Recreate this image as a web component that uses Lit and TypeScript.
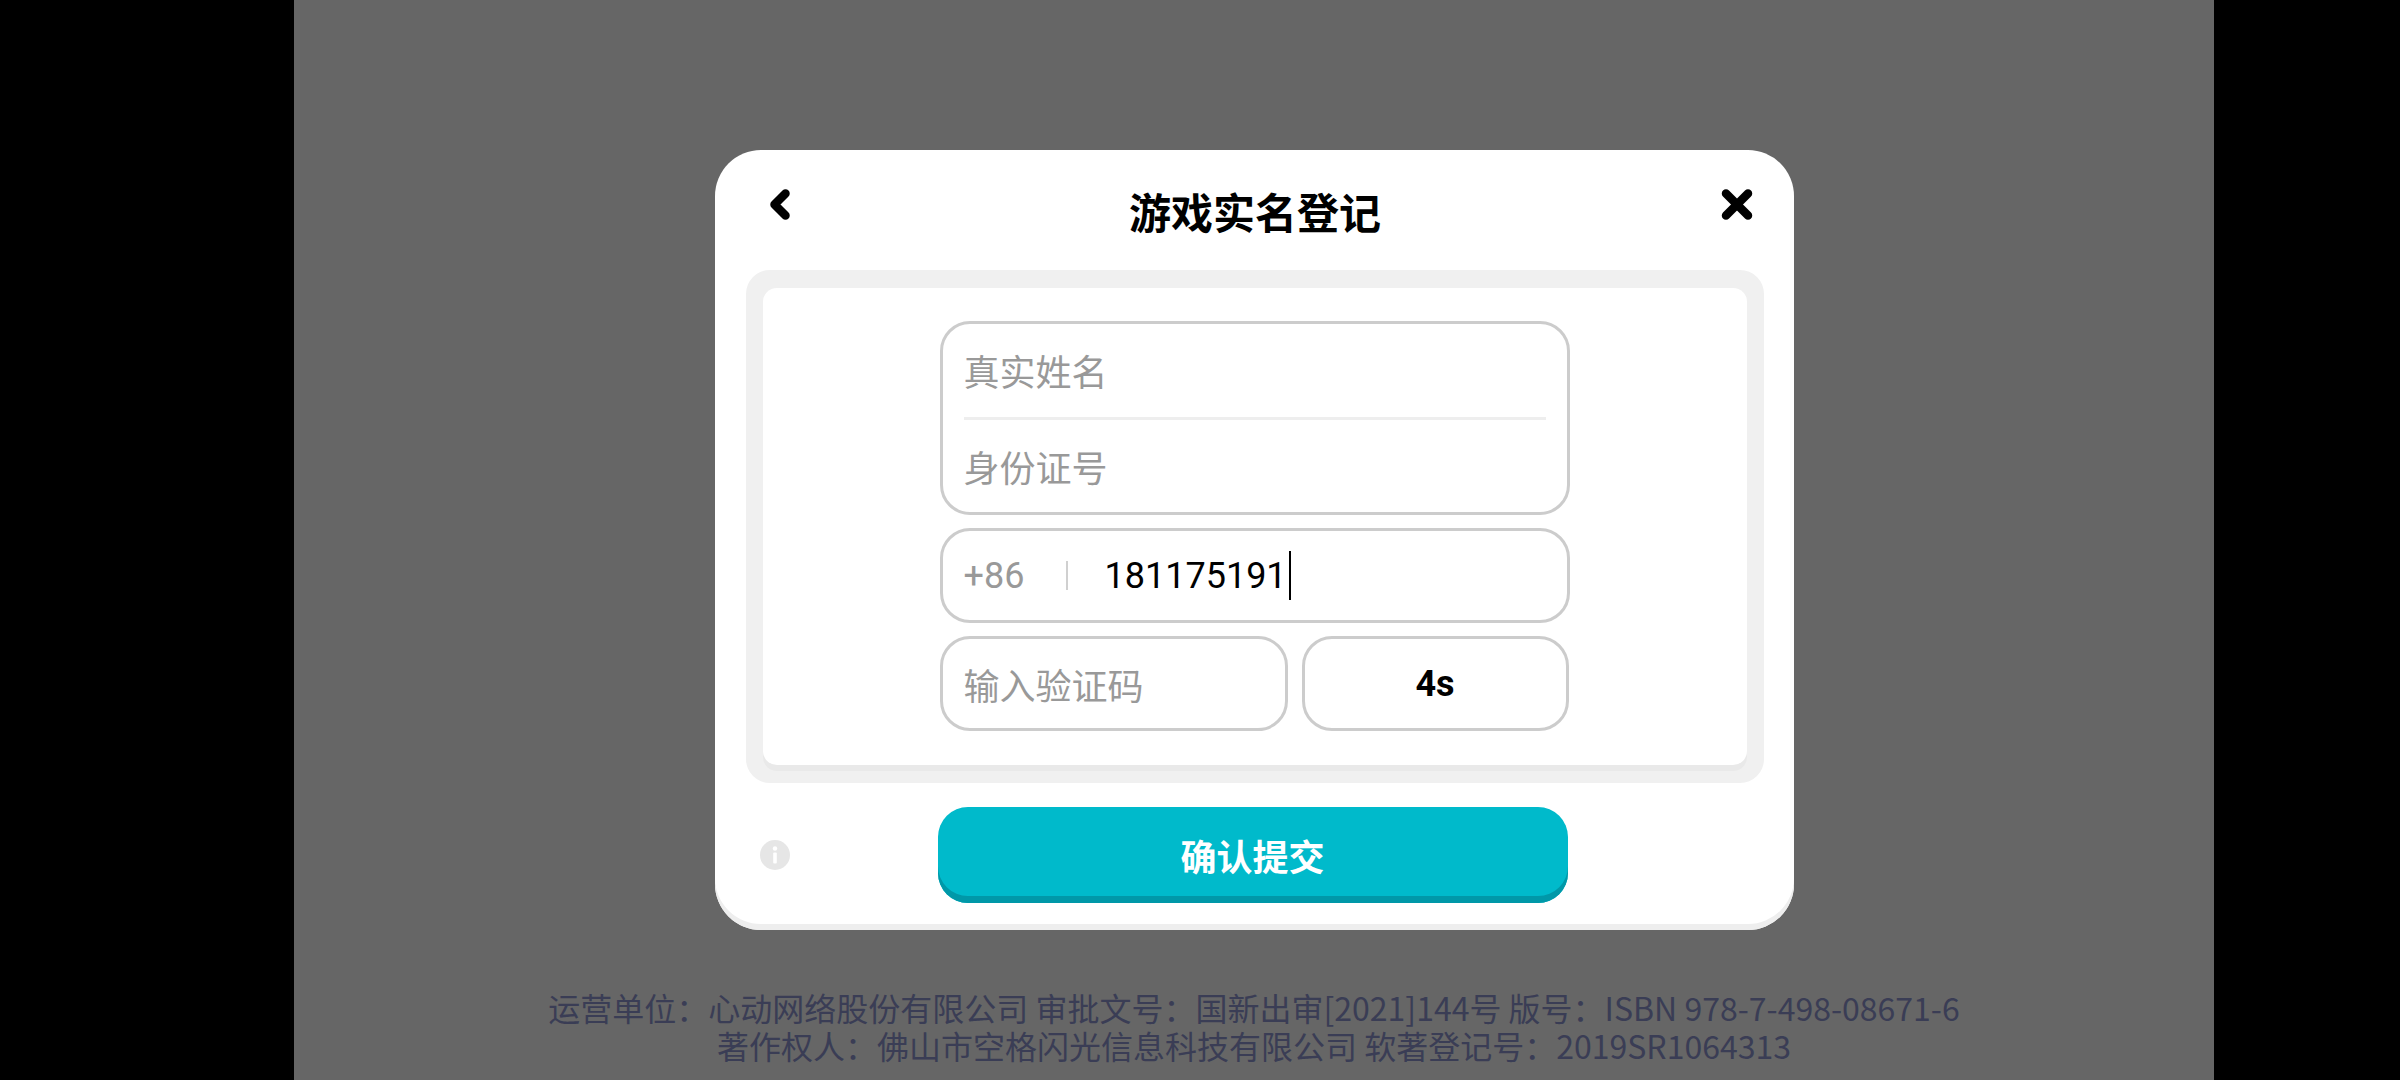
import { LitElement, html, css } from "lit";
import { customElement } from "lit/decorators.js";

@customElement("app-root")
export class AppRoot extends LitElement {
  static styles = css`
    :host {
      display: flex;
      justify-content: center;
      width: 2400px;
      height: 1080px;
      background: #000;
      overflow: hidden;
      font-family: "Noto Sans CJK SC", "Noto Sans", sans-serif;
    }
    * { box-sizing: border-box; }
    .stage {
      width: 1920px;
      margin-left: 108px;
      margin-right: 0;
      margin-inline: 294px 186px;
      flex: none;
      height: 1080px;
      background: #666;
      display: flex;
      flex-direction: column;
      align-items: center;
      padding-top: 150px;
    }
    .modal {
      width: 1079px;
      height: 780px;
      background: #fff;
      border-radius: 46px;
      box-shadow: inset 0 -6px 0 #eeeeee;
      display: flex;
      flex-direction: column;
      padding: 0 30px 0 31px;
    }
    .head {
      height: 120px;
      display: flex;
      align-items: center;
      justify-content: space-between;
      position: relative;
      padding: 0 11px 0 24px;
    }
    .head svg { display: block; margin-top: -12px; }
    .title {
      flex: 1;
      text-align: center;
      font-size: 42px;
      line-height: 1;
      font-weight: 700;
      color: #000;
      margin-top: 2px;
    }
    .panel {
      height: 513px;
      background: #f0f0f0;
      border-radius: 24px;
      padding: 18px 17px 24px 17px;
    }
    .inner {
      height: 477px;
      background: #fff;
      border-radius: 14px;
      box-shadow: 0 6px 0 #e9e9e9;
      display: flex;
      flex-direction: column;
      gap: 13px;
      padding: 33px 177px 0 177px;
    }
    .field {
      border: 3px solid #cccccc;
      border-radius: 30px;
      background: #fff;
      display: flex;
      align-items: center;
      padding: 0 21px;
      font-size: 36px;
      color: #999;
      line-height: 1;
    }
    .identity {
      height: 194px;
      flex-direction: column;
      align-items: stretch;
    }
    .identity .row {
      flex: 1;
      display: flex;
      align-items: center;
    }
    .identity hr {
      border: 0;
      margin: 0;
      height: 3px;
      background: #eeeeee;
    }
    .phone { height: 95px; }
    .cc { font-family: Roboto, sans-serif; width: 102px; }
    .sep { width: 2px; height: 29px; background: #d0d0d0; }
    .num {
      margin-left: 37px;
      color: #000;
      font-family: Roboto, sans-serif;
      display: flex;
      align-items: center;
    }
    .caret {
      width: 2px;
      height: 49px;
      background: #000;
      margin-left: 2px;
    }
    .code-row { display: flex; gap: 14px; }
    .code { width: 348px; height: 95px; }
    .send {
      width: 267px;
      height: 95px;
      justify-content: center;
      color: #000;
      font-family: Roboto, sans-serif;
      font-weight: 700;
    }
    .foot {
      display: flex;
      align-items: center;
      margin-top: 24px;
      padding-left: 14px;
    }
    .info { display: block; flex: none; }
    .submit {
      margin-left: 148px;
      width: 630px;
      height: 96px;
      border-radius: 30px;
      background: #00bacb;
      box-shadow: inset 0 -7px 0 #0098a8;
      color: #fff;
      font-size: 36px;
      font-weight: 700;
      line-height: 1;
      display: flex;
      align-items: center;
      justify-content: center;
      padding-bottom: 0;
    }
    .legal {
      margin-top: 58px;
      font-size: 32px;
      line-height: 38px;
      color: #3a3d55;
      text-align: center;
      white-space: nowrap;
    }
  `;

  render() {
    return html`
      <div class="stage">
        <div class="modal">
          <div class="head">
            <svg width="20" height="31" viewBox="0 0 20 31">
              <path d="M15.5 4.5 L4.5 15.5 L15.5 26.5" fill="none" stroke="#000" stroke-width="8.5" stroke-linecap="round" stroke-linejoin="round" />
            </svg>
            <div class="title">游戏实名登记</div>
            <svg width="32" height="31" viewBox="0 0 32 31">
              <path d="M5 4.5 L27 26.5 M27 4.5 L5 26.5" fill="none" stroke="#000" stroke-width="8.5" stroke-linecap="round" />
            </svg>
          </div>
          <div class="panel">
            <div class="inner">
              <div class="field identity">
                <div class="row">真实姓名</div>
                <hr />
                <div class="row">身份证号</div>
              </div>
              <div class="field phone">
                <span class="cc">+86</span>
                <span class="sep"></span>
                <span class="num">181175191<span class="caret"></span></span>
              </div>
              <div class="code-row">
                <div class="field code">输入验证码</div>
                <div class="field send">4s</div>
              </div>
            </div>
          </div>
          <div class="foot">
            <svg class="info" width="30" height="30" viewBox="0 0 30 30">
              <circle cx="15" cy="15" r="15" fill="#e6e6e6" />
              <circle cx="15" cy="8.5" r="2.2" fill="#fff" />
              <rect x="13.2" y="12.5" width="3.6" height="11" rx="1" fill="#fff" />
            </svg>
            <div class="submit">确认提交</div>
          </div>
        </div>
        <div class="legal">
          <div>运营单位：心动网络股份有限公司 审批文号：国新出审[2021]144号 版号：ISBN 978-7-498-08671-6</div>
          <div>著作权人：佛山市空格闪光信息科技有限公司 软著登记号：2019SR1064313</div>
        </div>
      </div>
    `;
  }
}
